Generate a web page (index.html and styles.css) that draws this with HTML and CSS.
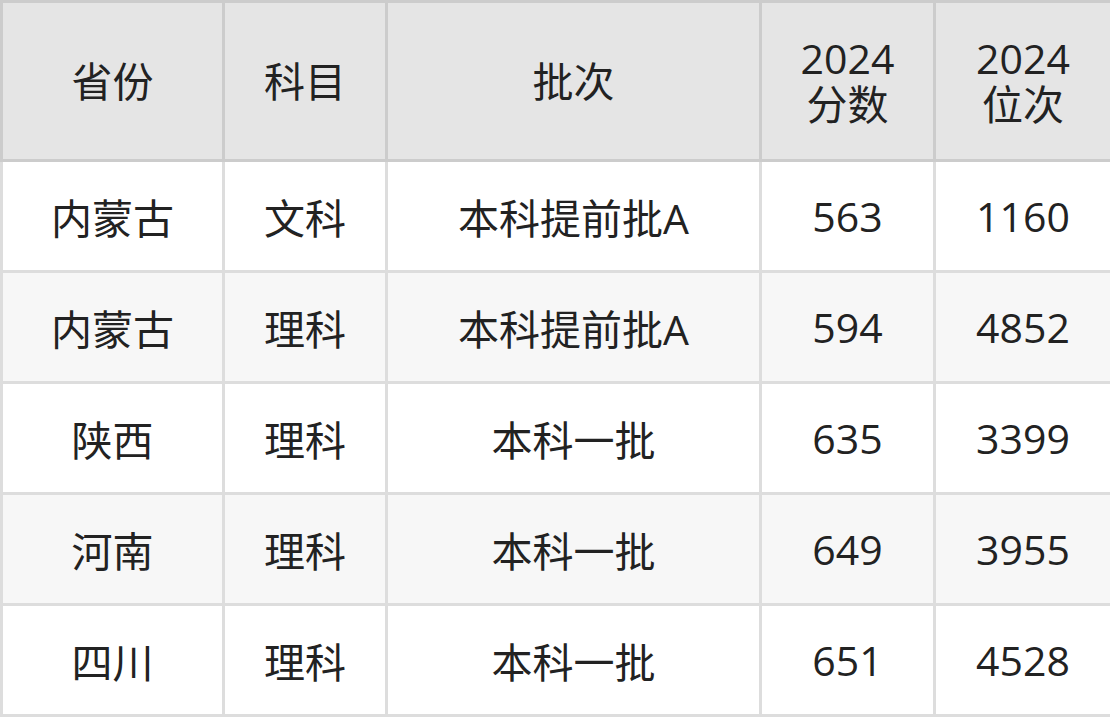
FILE: index.html
```html
<!DOCTYPE html>
<html lang="zh-CN">
<head>
<meta charset="utf-8">
<link rel="stylesheet" href="styles.css">
</head>
<body>
<table class="score-table">
  <colgroup>
    <col class="c1"><col class="c2"><col class="c3"><col class="c4"><col class="c5">
  </colgroup>
  <thead>
    <tr><th>省份</th><th>科目</th><th>批次</th><th>2024<br>分数</th><th>2024<br>位次</th></tr>
  </thead>
  <tbody>
    <tr><td>内蒙古</td><td>文科</td><td>本科提前批A</td><td>563</td><td>1160</td></tr>
    <tr><td>内蒙古</td><td>理科</td><td>本科提前批A</td><td>594</td><td>4852</td></tr>
    <tr><td>陕西</td><td>理科</td><td>本科一批</td><td>635</td><td>3399</td></tr>
    <tr><td>河南</td><td>理科</td><td>本科一批</td><td>649</td><td>3955</td></tr>
    <tr><td>四川</td><td>理科</td><td>本科一批</td><td>651</td><td>4528</td></tr>
  </tbody>
</table>
</body>
</html>
```
FILE: styles.css
```css
html, body {
  margin: 0;
  padding: 0;
  background: #ffffff;
}
.score-table {
  border-collapse: collapse;
  width: 1110px;
  table-layout: fixed;
  font-family: "Open Sans", "Noto Sans CJK SC", sans-serif;
  font-size: 41px;
  color: #222222;
}
.c1 { width: 222px; }
.c2 { width: 163px; }
.c3 { width: 374px; }
.c4 { width: 174px; }
.c5 { width: 177px; }
.score-table th,
.score-table td {
  text-align: center;
  vertical-align: middle;
  padding: 0;
}
.score-table th {
  font-weight: normal;
  background: #e5e5e5;
  border: 3px solid #cccccc;
  height: 156px;
  line-height: 46px;
}
.score-table td {
  border: 3px solid #dddddd;
  height: 108px;
}
.score-table tbody tr:nth-child(even) td {
  background: #f7f7f7;
}
```
